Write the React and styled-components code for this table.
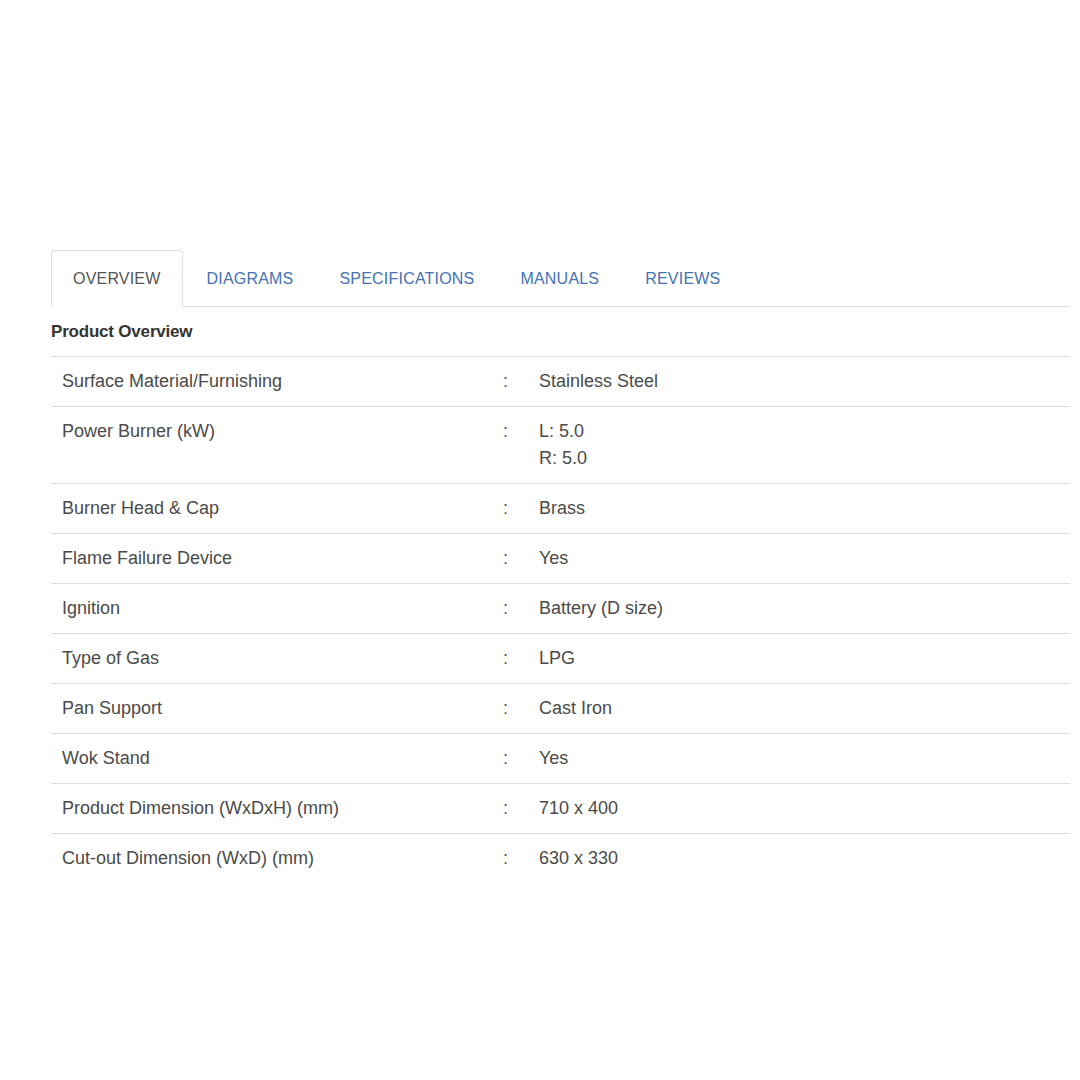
import React from "react";
import styled, { createGlobalStyle } from "styled-components";

const Global = createGlobalStyle`
  html, body { margin: 0; padding: 0; background: #fff; }
  body { font-family: "Liberation Sans", Arial, sans-serif; }
`;

const Page = styled.div`
  padding: 250px 10px 0 51px;
  width: 1080px;
  box-sizing: border-box;
`;

const TabBar = styled.ul`
  display: flex;
  list-style: none;
  margin: 0;
  padding: 0;
  border-bottom: 1px solid #dddddd;
`;

const Tab = styled.li`
  height: 55px;
  display: flex;
  align-items: center;
  padding: 0 21px;
  margin: 0 2px -1px 0;
  font-size: 16px;
  letter-spacing: 0.2px;
  color: ${(p) => (p.$active ? "#555555" : "#4672b3")};
  background: ${(p) => (p.$active ? "#fff" : "transparent")};
  border: 1px solid ${(p) => (p.$active ? "#dddddd" : "transparent")};
  border-bottom-color: ${(p) => (p.$active ? "#fff" : "transparent")};
  border-radius: 4px 4px 0 0;
  box-sizing: content-box;
`;

const Table = styled.table`
  width: 100%;
  border-collapse: collapse;
  font-size: 18px;
  color: #4a4a4a;
`;

const Heading = styled.th`
  text-align: left;
  padding: 0;
  height: 49px;
  font-size: 17px;
  font-weight: bold;
  color: #333;
  letter-spacing: -0.2px;
`;

const Cell = styled.td`
  border-top: 1px solid #dddddd;
  padding: 11px 11px;
  line-height: 27px;
  vertical-align: top;
  width: ${(p) => p.$w || "auto"};
`;

const ColonCell = styled(Cell)`
  width: 14px;
  text-align: left;
  padding-left: 9px;
  color: #555;
`;

const Line = styled.div``;

const tabs = ["OVERVIEW", "DIAGRAMS", "SPECIFICATIONS", "MANUALS", "REVIEWS"];

const rows = [
  ["Surface Material/Furnishing", ["Stainless Steel"]],
  ["Power Burner (kW)", ["L: 5.0", "R: 5.0"]],
  ["Burner Head & Cap", ["Brass"]],
  ["Flame Failure Device", ["Yes"]],
  ["Ignition", ["Battery (D size)"]],
  ["Type of Gas", ["LPG"]],
  ["Pan Support", ["Cast Iron"]],
  ["Wok Stand", ["Yes"]],
  ["Product Dimension (WxDxH) (mm)", ["710 x 400"]],
  ["Cut-out Dimension (WxD) (mm)", ["630 x 330"]],
];

export default function App() {
  return (
    <>
      <Global />
      <Page>
        <TabBar>
          {tabs.map((t, i) => (
            <Tab key={t} $active={i === 0}>
              {t}
            </Tab>
          ))}
        </TabBar>
        <Table>
          <thead>
            <tr>
              <Heading colSpan={3}>Product Overview</Heading>
            </tr>
          </thead>
          <tbody>
            {rows.map(([label, vals]) => (
              <tr key={label}>
                <Cell $w="421px">{label}</Cell>
                <ColonCell>:</ColonCell>
                <Cell>
                  {vals.map((v) => (
                    <Line key={v}>{v}</Line>
                  ))}
                </Cell>
              </tr>
            ))}
          </tbody>
        </Table>
      </Page>
    </>
  );
}
